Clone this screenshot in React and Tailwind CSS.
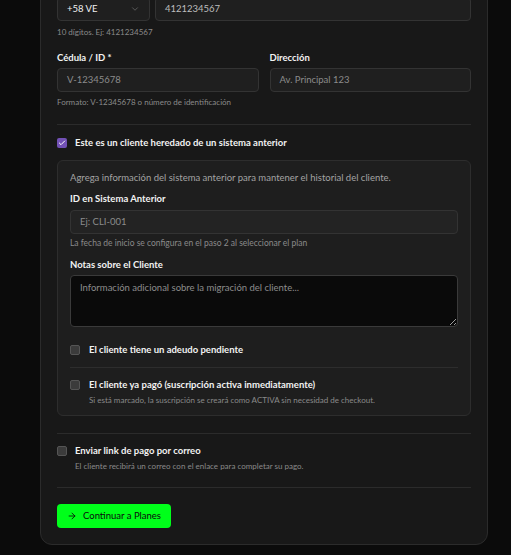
import React from 'react';
import { ChevronDown, ArrowRight, Check } from 'lucide-react';

const font = { fontFamily: 'Lato, "Noto Sans", sans-serif' };

const Box = ({ checked }) =>
  checked ? (
    <span className="flex items-center justify-center w-[10px] h-[10px] rounded-[2px] bg-[#7251b5] shrink-0">
      <Check size={8} strokeWidth={3} className="text-white" />
    </span>
  ) : (
    <span className="block w-[10px] h-[10px] rounded-[2px] bg-[#3b3b3b] border border-[#555] shrink-0" />
  );

const Field = ({ label, placeholder }) => (
  <div>
    <div className="text-[9.5px] leading-[14px] font-bold text-[#f2f2f2]">{label}</div>
    <div className="mt-[3px] h-6 rounded-[4px] border border-[#333] bg-[#1f1f1f] px-[9px] flex items-center text-[9.5px] text-[#8c8c8c]">
      {placeholder}
    </div>
  </div>
);

export default function App() {
  return (
    <div className="min-h-screen bg-[#0b0b0b] overflow-hidden" style={font}>
      <div className="ml-[40px] -mt-[37px] w-[448px] bg-[#181818] border border-[#2b2b2b] rounded-xl px-4 pt-4 pb-4">
        <div className="text-[9.5px] leading-[14px] font-bold text-[#f2f2f2]">Teléfono *</div>
        <div className="mt-[3px] flex gap-[5px] h-6">
          <div className="w-[93px] h-6 rounded-[4px] border border-[#333] bg-[#1f1f1f] px-[9px] flex items-center justify-between text-[9.5px] text-[#f0f0f0]">
            <span>+58 VE</span>
            <ChevronDown size={10} className="text-[#666]" />
          </div>
          <div className="flex-1 h-6 rounded-[4px] border border-[#333] bg-[#1f1f1f] px-[9px] flex items-center text-[9.5px] text-[#bdbdbd]">
            4121234567
          </div>
        </div>
        <div className="mt-[5px] text-[8px] leading-[12px] text-[#8a8a8a]">10 dígitos. Ej: 4121234567</div>

        <div className="mt-[13px] grid grid-cols-2 gap-[11px]">
          <Field label="Cédula / ID *" placeholder="V-12345678" />
          <Field label="Dirección" placeholder="Av. Principal 123" />
        </div>
        <div className="mt-[4px] text-[8px] leading-[12px] text-[#8a8a8a]">Formato: V-12345678 o número de identificación</div>

        <div className="mt-[16px] h-px bg-[#2b2b2b]" />

        <div className="mt-[11px] flex items-center gap-[8px] text-[9.5px] leading-[14px] font-bold text-[#f2f2f2]">
          <Box checked />
          <span>Este es un cliente heredado de un sistema anterior</span>
        </div>

        <div className="mt-[10px] rounded-md border border-[#2d2d2d] bg-[#1e1e1e] px-3 pt-[10px] pb-[9px]">
          <div className="text-[9.5px] leading-[14px] text-[#a3a3a3]">
            Agrega información del sistema anterior para mantener el historial del cliente.
          </div>
          <div className="mt-[7px] text-[9.5px] leading-[14px] font-bold text-[#f2f2f2]">ID en Sistema Anterior</div>
          <div className="mt-[4px] h-6 rounded-[4px] border border-[#333] bg-[#232323] px-[9px] flex items-center text-[9.5px] text-[#8c8c8c]">
            Ej: CLI-001
          </div>
          <div className="mt-[3px] text-[8.5px] leading-[12px] text-[#8a8a8a]">
            La fecha de inicio se configura en el paso 2 al seleccionar el plan
          </div>
          <div className="mt-[9px] text-[9.5px] leading-[14px] font-bold text-[#f2f2f2]">Notas sobre el Cliente</div>
          <textarea
            readOnly
            placeholder="Información adicional sobre la migración del cliente..."
            className="mt-[3px] block w-full h-[52px] rounded-[4px] border border-[#3a3a3a] bg-[#0a0a0a] px-[9px] py-[5px] text-[9.5px] leading-[14px] text-[#ccc] placeholder:text-[#8c8c8c] outline-none"
          />
          <div className="mt-[16px] flex items-center gap-[9px] text-[9.5px] leading-[14px] font-bold text-[#f2f2f2]">
            <Box />
            <span>El cliente tiene un adeudo pendiente</span>
          </div>
          <div className="mt-[10px] h-px bg-[#2d2d2d]" />
          <div className="mt-[10px] flex items-center gap-[9px] text-[9.5px] leading-[14px] font-bold text-[#f2f2f2]">
            <Box />
            <span>El cliente ya pagó (suscripción activa inmediatamente)</span>
          </div>
          <div className="mt-[2px] pl-[19px] text-[8px] leading-[12px] text-[#8a8a8a]">
            Si está marcado, la suscripción se creará como ACTIVA sin necesidad de checkout.
          </div>
        </div>

        <div className="mt-[17px] h-px bg-[#2b2b2b]" />

        <div className="mt-[10px] flex items-center gap-[8px] text-[9.5px] leading-[14px] font-bold text-[#f2f2f2]">
          <Box />
          <span>Enviar link de pago por correo</span>
        </div>
        <div className="mt-[2px] pl-[18px] text-[8px] leading-[12px] text-[#8a8a8a]">
          El cliente recibirá un correo con el enlace para completar su pago.
        </div>

        <div className="mt-[15px] h-px bg-[#2b2b2b]" />

        <button className="mt-[16px] h-6 px-[10px] rounded-[4px] bg-[#00ff1a] text-[#0b0b0b] text-[9.5px] whitespace-nowrap flex items-center gap-[6px]">
          <ArrowRight size={10} strokeWidth={2} />
          <span>Continuar a Planes</span>
        </button>
      </div>
    </div>
  );
}
